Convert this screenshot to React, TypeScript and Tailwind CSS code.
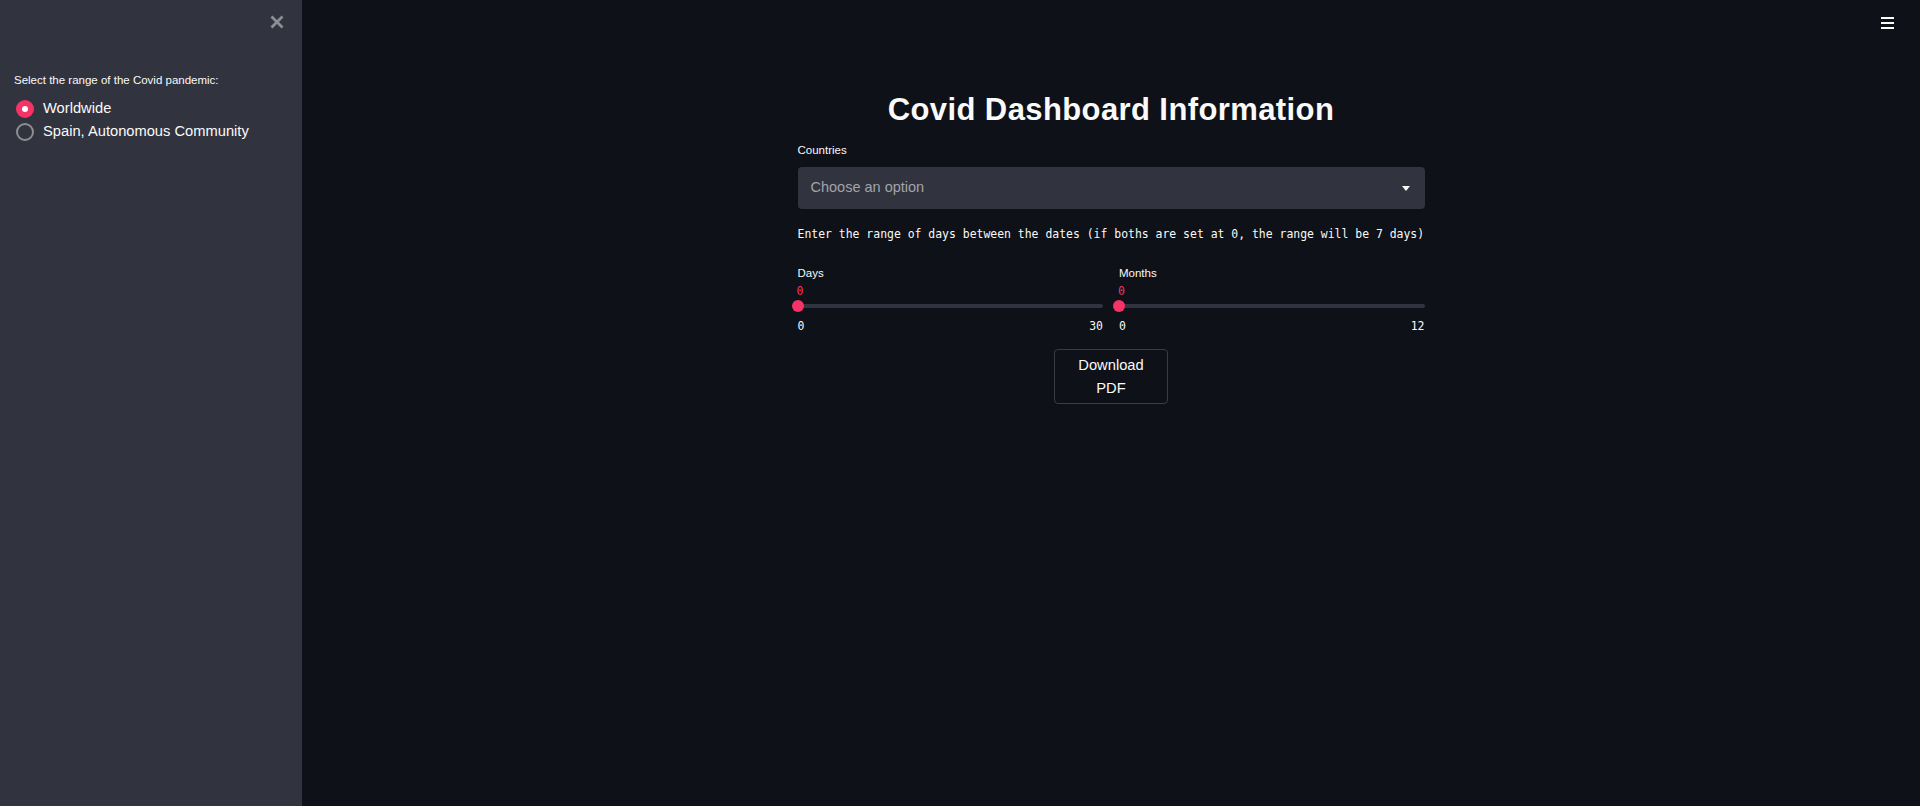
import { useState } from 'react';

const RANGES = ['Worldwide', 'Spain, Autonomous Community'];

function Slider({ label, max }: { label: string; max: number }) {
  return (
    <div className="flex flex-col">
      <span className="text-[11.5px] leading-[16px] text-[#fafafa]">{label}</span>
      <span className="mt-[2px] font-['DejaVu_Sans_Mono',monospace] text-[11.45px] leading-[16px] text-[#f63366] -ml-[1px]">0</span>
      {/* track + thumb */}
      <div className="relative mt-[1px] h-[12px] flex items-center">
        <div className="h-[4px] w-full rounded-full bg-[#31333f]" />
        <div className="absolute -left-[6px] top-0 h-[12px] w-[12px] rounded-full bg-[#f63366]" />
      </div>
      <div className="mt-[6px] flex justify-between font-['DejaVu_Sans_Mono',monospace] text-[11.45px] leading-[16px] text-[#fafafa]">
        <span>0</span>
        <span>{max}</span>
      </div>
    </div>
  );
}

export default function App() {
  const [range, setRange] = useState(RANGES[0]);

  return (
    <div className="flex h-[806px] w-full overflow-hidden font-['Liberation_Sans',Arial,sans-serif] text-[#fafafa]">
      {/* Sidebar */}
      <aside className="flex w-[302px] shrink-0 flex-col bg-[#31333f]">
        <div className="flex h-[44px] items-center justify-end pr-[18px]">
          <button type="button" className="text-[#8d8e94]">
            <svg width="14" height="14" viewBox="0 0 14 14" fill="none">
              <path d="M1.5 1.5L12.5 12.5M12.5 1.5L1.5 12.5" stroke="currentColor" strokeWidth="2.8" />
            </svg>
          </button>
        </div>
        <p className="mt-[28px] pl-[14px] text-[11.5px] leading-[16px]">Select the range of the Covid pandemic:</p>
        <div className="mt-[9px] flex flex-col pl-[16px]">
          {RANGES.map(r => (
            <label key={r} className="flex h-[23px] cursor-pointer items-center gap-[9px] text-[14.7px]" onClick={() => setRange(r)}>
              {range === r ? (
                <span className="flex h-[18px] w-[18px] items-center justify-center rounded-full bg-[#f63366]">
                  <span className="h-[6px] w-[6px] rounded-full bg-white" />
                </span>
              ) : (
                <span className="h-[18px] w-[18px] rounded-full border-2 border-[#8d8e94]" />
              )}
              <span>{r}</span>
            </label>
          ))}
        </div>
      </aside>

      {/* Main */}
      <main className="flex flex-1 flex-col bg-[#0e1117]">
        <div className="flex h-[46px] items-start justify-end pr-[26px] pt-[17px]">
          <button type="button" className="flex w-[13px] flex-col gap-[3px]">
            <span className="h-[2px] w-full bg-[#fafafa]" />
            <span className="h-[2px] w-full bg-[#fafafa]" />
            <span className="h-[2px] w-full bg-[#fafafa]" />
          </button>
        </div>

        <div className="mx-auto mt-[44px] flex w-[627px] flex-col">
          <h1 className="text-center text-[31px] font-bold leading-[40px] tracking-[0.4px]">Covid Dashboard Information</h1>

          <span className="mt-[12px] text-[11.5px] leading-[16px]">Countries</span>
          <div className="mt-[9px] flex h-[42px] items-center justify-between rounded-[4px] bg-[#31333f] pl-[13px] pr-[15px]">
            <span className="text-[14.5px] text-[#a3a4aa]">Choose an option</span>
            <svg width="8" height="5" viewBox="0 0 8 5">
              <path d="M0 0H8L4 5Z" fill="#fafafa" />
            </svg>
          </div>

          <p className="mt-[17px] font-['DejaVu_Sans_Mono',monospace] text-[11.45px] leading-[16px] whitespace-nowrap">
            Enter the range of days between the dates (if boths are set at 0, the range will be 7 days)
          </p>

          <div className="mt-[23px] grid grid-cols-2 gap-[16px]">
            <Slider label="Days" max={30} />
            <Slider label="Months" max={12} />
          </div>

          <button
            type="button"
            className="mx-auto mt-[15px] flex h-[55px] w-[114px] flex-col items-center justify-center rounded-[4px] border border-[#3b3d44] text-[14.7px] leading-[23px]"
          >
            <span>Download</span>
            <span>PDF</span>
          </button>
        </div>
      </main>
    </div>
  );
}
